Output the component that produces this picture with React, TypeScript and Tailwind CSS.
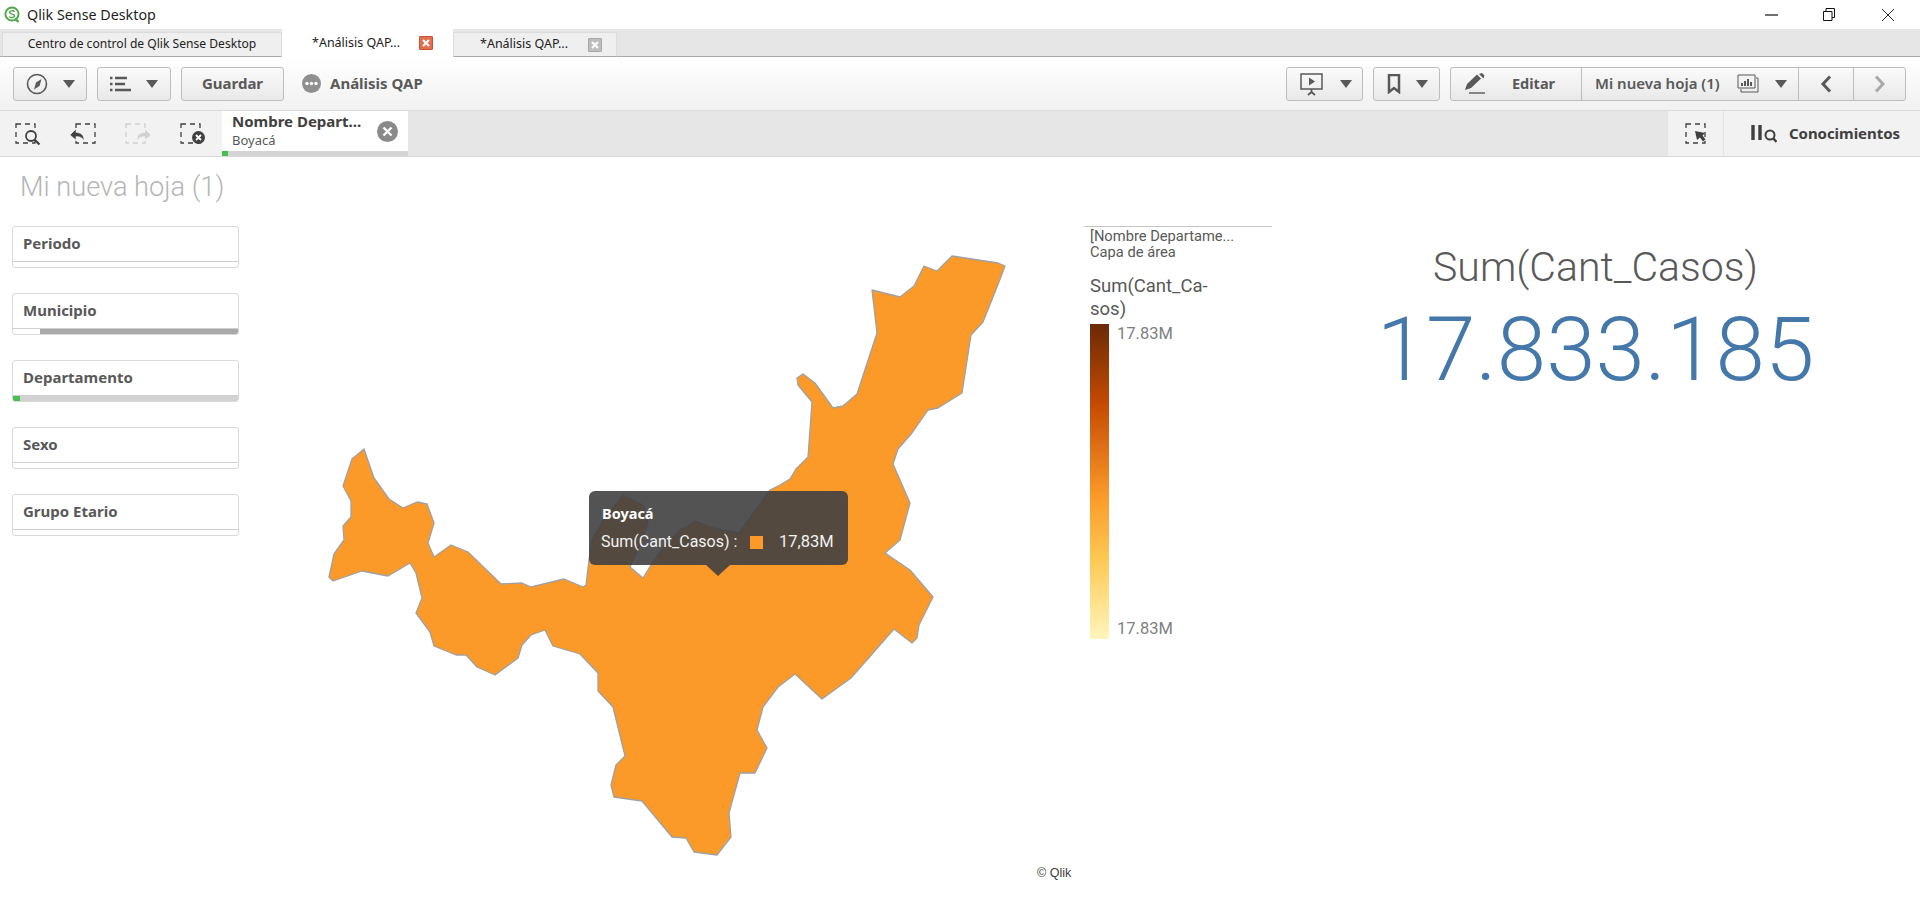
const UI = "font-['Noto_Sans',sans-serif]";

const BOYACA =
  "364,449 374,478 389,499 403,508 417,502 427,504 434,523 428,543 434,557 451,545 468,552 501,584 522,583 531,587 564,579 583,587 586,585 589,560 592,540 602,522 623,495 643,505 648,523 640,545 630,567 643,578 651,565 665,545 680,530 696,521 713,528 739,533 770,490 780,485 790,479 796,469 808,457 812,402 798,385 797,378 803,374 815,383 833,408 843,406 857,394 877,333 872,290 900,297 914,286 924,266 937,271 952,256 998,263 1005,266 997,287 983,322 971,335 962,393 938,408 928,410 912,433 898,449 893,464 910,503 900,540 885,553 910,570 933,597 919,625 917,638 912,643 894,629 851,678 822,699 795,674 778,687 763,707 757,730 767,748 755,773 740,773 729,813 731,837 717,855 694,852 686,838 672,837 642,801 614,797 611,785 616,765 625,756 613,707 598,691 598,673 580,654 553,646 545,630 531,635 522,645 518,658 495,675 477,667 466,655 456,655 434,646 430,632 416,613 422,598 416,573 410,563 388,576 362,571 333,581 329,577 334,554 344,540 343,526 351,517 351,501 343,486 352,459";

const Caret = () => (
  <svg width="12" height="8" viewBox="0 0 12 8"><path d="M0 0h12L6 8z" fill="#595959" /></svg>
);

// dashed selection frame used by the tools in the selection bar
const Frame = ({ x = 1, color = "#404040" }: { x?: number; color?: string }) => (
  <rect x={x} y="1" width="19" height="19" fill="none" stroke={color} strokeWidth="1.3" strokeDasharray="5 4" />
);

const ToolButton = ({ children, className = "" }: { children: React.ReactNode; className?: string }) => (
  <div className={`h-[34px] flex items-center border border-[#bdbdbd] rounded-[3px] bg-gradient-to-b from-[#fafafa] to-[#e9e9e9] ${className}`}>
    {children}
  </div>
);

const Filter = ({ name, strip }: { name: string; strip: React.ReactNode }) => (
  <div className="h-[42px] flex flex-col border border-[#d9d9d9] rounded-[3px] overflow-hidden bg-white">
    <div className="flex-1 pl-[10px] pt-[5px] text-[15px] leading-[22px] font-bold text-[#595959]">{name}</div>
    <div className="h-[6px] flex border-t border-[#cfcfcf]">{strip}</div>
  </div>
);

const App = () => {
  return (
    <div className={`${UI} w-[1920px] h-[905px] flex flex-col bg-white overflow-hidden`}>
      {/* Window title bar */}
      <div className="h-[29px] shrink-0 flex items-center bg-white">
        <svg className="ml-[4px]" width="16" height="17" viewBox="0 0 16 17">
          <circle cx="8" cy="8" r="6.6" fill="none" stroke="#52a94a" strokeWidth="2" />
          <path d="M11 12.5l3.5 3.5" stroke="#52a94a" strokeWidth="2.4" />
          <path d="M10.6 5.6C9.6 4.6 5.6 4.4 5.6 6.4c0 2 5 1.4 5 3.6 0 1.9-4 2-5.4.8" fill="none" stroke="#52a94a" strokeWidth="1.5" />
        </svg>
        <span className="ml-[7px] text-[14.3px] text-[#1f1f1f]">Qlik Sense Desktop</span>
        <div className="ml-auto flex items-center">
          <svg className="mr-[45px]" width="13" height="2" viewBox="0 0 13 2"><path d="M0 1h13" stroke="#111" strokeWidth="1.2" /></svg>
          <svg className="mr-[47px]" width="12" height="13" viewBox="0 0 12 13">
            <path d="M.5 3.5h8.5v9H.5zM3 3.5V.5h8.5v9H9" fill="none" stroke="#111" />
          </svg>
          <svg className="mr-[26px]" width="12" height="12" viewBox="0 0 12 12"><path d="M0 0l12 12M12 0L0 12" stroke="#111" strokeWidth="0.9" /></svg>
        </div>
      </div>

      {/* Browser tabs */}
      <div className="h-[28px] shrink-0 flex items-end bg-[#e6e6e6] border-b border-[#a9a9a9] pl-[2px] text-[12.5px] text-[#222]">
        <div className="w-[280px] h-[25px] -mb-px flex items-center justify-center bg-[#efefef] border border-[#dcdcdc] border-b-[#a9a9a9] text-[12.1px]">
          Centro de control de Qlik Sense Desktop
        </div>
        <div className="w-[171px] h-[28px] -mb-px flex items-center bg-white pl-[30px]">
          <span>*Análisis QAP...</span>
          <span className="ml-[19px] w-[14px] h-[14px] flex items-center justify-center bg-[#e2704f] border border-[#c9523a] rounded-[1px]">
            <svg width="8" height="8" viewBox="0 0 8 8"><path d="M1 1l6 6M7 1L1 7" stroke="#fff" strokeWidth="2" /></svg>
          </span>
        </div>
        <div className="w-[164px] h-[25px] -mb-px flex items-center bg-[#efefef] border border-[#dcdcdc] border-b-[#a9a9a9] pl-[26px]">
          <span>*Análisis QAP...</span>
          <span className="ml-[20px] w-[14px] h-[14px] flex items-center justify-center bg-[#bdbdbd] border border-[#a8a8a8] rounded-[1px]">
            <svg width="8" height="8" viewBox="0 0 8 8"><path d="M1 1l6 6M7 1L1 7" stroke="#fff" strokeWidth="2" /></svg>
          </span>
        </div>
      </div>

      {/* App toolbar */}
      <div className="h-[54px] shrink-0 flex items-center pl-[13px] pr-[14px] bg-gradient-to-b from-white to-[#f1f1f1] border-b border-[#dcdcdc] text-[#595959]">
        <ToolButton className="w-[74px] pl-[12px] gap-[15px]">
          <svg width="22" height="22" viewBox="0 0 22 22">
            <circle cx="11" cy="11" r="9.5" fill="none" stroke="#595959" strokeWidth="1.6" />
            <path d="M15.5 6l-2 7-5.5 3.5 2-7z" fill="#595959" />
          </svg>
          <Caret />
        </ToolButton>
        <ToolButton className="ml-[10px] w-[74px] pl-[12px] gap-[15px]">
          <svg width="21" height="16" viewBox="0 0 21 16">
            <path d="M0 2h2.5M5 2h12M0 8h2.5M5 8h10M0 14h2.5M5 14h16" stroke="#595959" strokeWidth="2.5" />
          </svg>
          <Caret />
        </ToolButton>
        <ToolButton className="ml-[10px] w-[103px] justify-center text-[15px] font-bold">Guardar</ToolButton>
        <svg className="ml-[18px]" width="19" height="19" viewBox="0 0 19 19">
          <circle cx="9.5" cy="9.5" r="9.5" fill="#8f8f8f" />
          <circle cx="5" cy="9.5" r="1.7" fill="#fff" />
          <circle cx="9.5" cy="9.5" r="1.7" fill="#fff" />
          <circle cx="14" cy="9.5" r="1.7" fill="#fff" />
        </svg>
        <span className="ml-[9px] text-[15px] font-bold">Análisis QAP</span>

        <ToolButton className="ml-auto w-[77px] pl-[13px] gap-[16px]">
          <svg width="24" height="24" viewBox="0 0 24 24">
            <path d="M1 2h21v15H1z" fill="none" stroke="#595959" strokeWidth="1.5" />
            <path d="M9 5.5l6 4-6 4z" fill="#595959" />
            <path d="M11.5 17v3M8 23l3.5-3 3.5 3" fill="none" stroke="#595959" strokeWidth="1.8" />
          </svg>
          <Caret />
        </ToolButton>
        <ToolButton className="ml-[10px] w-[67px] pl-[13px] gap-[15px]">
          <svg width="14" height="20" viewBox="0 0 14 20"><path d="M2 1h10v17l-5-4-5 4z" fill="none" stroke="#595959" strokeWidth="2.5" /></svg>
          <Caret />
        </ToolButton>
        <ToolButton className="ml-[10px] w-[456px]">
          <div className="w-[131px] h-full flex items-center pl-[13px] border-r border-[#bdbdbd]">
            <svg width="21" height="21" viewBox="0 0 21 21">
              <path d="M1 17l2-6L13 1.5l4 4L7 15z" fill="#595959" />
              <path d="M15 1l3-1 2.5 2.5-1 3z" fill="#595959" />
              <path d="M5 20h16" stroke="#595959" strokeWidth="1.4" />
            </svg>
            <span className="ml-[27px] text-[14.5px] font-bold">Editar</span>
          </div>
          <div className="w-[217px] h-full flex items-center pl-[13px] border-r border-[#bdbdbd]">
            <span className="text-[15px] font-semibold whitespace-nowrap">Mi nueva hoja (1)</span>
            <svg className="ml-[17px]" width="22" height="19" viewBox="0 0 22 19">
              <path d="M1 1h17v13H1z" fill="none" stroke="#595959" />
              <path d="M19 4h2v14H4v-3" fill="none" stroke="#595959" />
              <path d="M5 12V9M8 12V7M11 12V5M14 12V8" stroke="#595959" strokeWidth="2" />
            </svg>
            <span className="ml-[16px]"><Caret /></span>
          </div>
          <div className="w-[55px] h-full flex items-center justify-center border-r border-[#bdbdbd]">
            <svg width="12" height="18" viewBox="0 0 12 18"><path d="M10 1.5L3 9l7 7.5" fill="none" stroke="#595959" strokeWidth="3" /></svg>
          </div>
          <div className="flex-1 h-full flex items-center justify-center">
            <svg width="12" height="18" viewBox="0 0 12 18"><path d="M2 1.5L9 9l-7 7.5" fill="none" stroke="#a8a8a8" strokeWidth="3" /></svg>
          </div>
        </ToolButton>
      </div>

      {/* Selection bar */}
      <div className="h-[46px] shrink-0 flex bg-[#e6e6e6] border-b border-[#d9d9d9] text-[#404040]">
        <div className="w-[222px] h-full flex items-center bg-[#f2f2f2] pl-[15px]">
          <svg width="26" height="22" viewBox="0 0 26 22">
            <Frame />
            <circle cx="16" cy="13" r="5" fill="#f2f2f2" stroke="#404040" strokeWidth="1.8" />
            <path d="M19.5 16.5l5 5" stroke="#404040" strokeWidth="2.2" />
          </svg>
          <svg className="ml-[29px]" width="26" height="22" viewBox="0 0 26 22">
            <Frame x={6} />
            <path d="M0 12l6-6v3.5c5 0 8 2.5 8 8-2-3-4-4-8-4V17z" fill="#404040" stroke="#f2f2f2" strokeWidth="0.6" />
          </svg>
          <svg className="ml-[29px]" width="26" height="22" viewBox="0 0 26 22">
            <Frame color="#d0d0d0" />
            <path d="M26 12l-6-6v3.5c-5 0-8 2.5-8 8 2-3 4-4 8-4V17z" fill="#d0d0d0" stroke="#f2f2f2" strokeWidth="0.6" />
          </svg>
          <svg className="ml-[29px]" width="26" height="22" viewBox="0 0 26 22">
            <Frame />
            <circle cx="18.5" cy="14.5" r="6.5" fill="#404040" />
            <path d="M16 12l5 5M21 12l-5 5" stroke="#fff" strokeWidth="1.8" />
          </svg>
        </div>
        <div className="w-[186px] h-full flex flex-col bg-white">
          <div className="flex-1 flex items-center pl-[10px]">
            <div className="w-[144px]">
              <div className="text-[15px] leading-[19px] font-bold text-[#404040] whitespace-nowrap">Nombre Depart...</div>
              <div className="text-[13px] leading-[19px] text-[#595959]">Boyacá</div>
            </div>
            <svg className="ml-[1px]" width="21" height="21" viewBox="0 0 21 21">
              <circle cx="10.5" cy="10.5" r="10.5" fill="#8a8a8a" />
              <path d="M6.5 6.5l8 8M14.5 6.5l-8 8" stroke="#fff" strokeWidth="2.4" />
            </svg>
          </div>
          <div className="h-[5px] bg-[#d4d4d4]"><div className="w-[6px] h-full bg-[#46c04f]" /></div>
        </div>
        <div className="ml-auto w-[56px] h-full flex items-center justify-center bg-[#f2f2f2] border-l border-[#e3e3e3]">
          <svg width="22" height="21" viewBox="0 0 22 21">
            <Frame />
            <path d="M10 8l10 2-2.5 2.5 3 4-2.5 2-3-4L12 17z" fill="#404040" />
          </svg>
        </div>
        <div className="w-[197px] h-full flex items-center bg-[#f2f2f2] border-l border-[#e3e3e3] pl-[27px]">
          <svg width="26" height="19" viewBox="0 0 26 19">
            <path d="M2 1v15M9 1v15" stroke="#404040" strokeWidth="3.4" />
            <circle cx="19" cy="11" r="4.5" fill="none" stroke="#404040" strokeWidth="2" />
            <path d="M22 14l3.5 4" stroke="#404040" strokeWidth="2.4" />
          </svg>
          <span className="ml-[12px] text-[15px] font-bold tracking-[-0.05px] text-[#404040]">Conocimientos</span>
        </div>
      </div>

      {/* Sheet */}
      <div className="flex-1 flex flex-col">
        <div className="h-[69px] shrink-0 pl-[20px] pt-[11px] text-[27.2px] leading-[38px] text-[#b5b5b5] font-['Roboto',sans-serif] font-light whitespace-nowrap">
          Mi nueva hoja (1)
        </div>
        <div className="flex-1 flex">
          {/* Filter panes */}
          <div className="ml-[12px] w-[227px] flex flex-col gap-[25px]">
            <Filter name="Periodo" strip={null} />
            <Filter name="Municipio" strip={<div className="ml-[27px] flex-1 bg-[#a9a9a9]" />} />
            <Filter name="Departamento" strip={<div className="flex-1 bg-[#d2d2d2]"><div className="w-[7px] h-full bg-[#46c04f]" /></div>} />
            <Filter name="Sexo" strip={null} />
            <Filter name="Grupo Etario" strip={null} />
          </div>

          {/* Map */}
          <div className="relative w-[845px] h-[640px]">
            <svg width="845" height="640" viewBox="239 226 845 640">
              <polygon points={BOYACA} fill="#fb9a29" stroke="#a0a0a0" strokeWidth="1.3" strokeLinejoin="round" />
            </svg>
            <div className="absolute left-[350px] top-[265px] w-[259px] h-[74px] rounded-[6px] bg-[#404040]/90 text-white">
              <div className="pl-[13px] pt-[12px] text-[14.5px] leading-[20px] font-bold">Boyacá</div>
              <div className="flex items-center pl-[12px] pt-[9px] text-[16px] leading-[20px] font-['Roboto',sans-serif] text-[#f2f2f2]">
                <span className="w-[149px] whitespace-nowrap">Sum(Cant_Casos) :</span>
                <span className="w-[13px] h-[13px] bg-[#fb9a29]" />
                <span className="ml-[16px] text-[16.5px]">17,83M</span>
              </div>
              <div className="absolute left-[117px] top-full w-0 h-0 border-x-[12px] border-x-transparent border-t-[11px] border-t-[#404040]/90" />
            </div>
          </div>

          {/* Legend */}
          <div className="w-[188px] h-[414px] flex flex-col border-t border-[#c4c4c4] pl-[6px] font-['Roboto',sans-serif] text-[#595959]">
            <div className="pt-[1px] text-[14.7px] leading-[16px] whitespace-nowrap">[Nombre Departame...</div>
            <div className="text-[14.7px] leading-[16px]">Capa de área</div>
            <div className="mt-[15px] w-[125px] text-[18.5px] leading-[23px]">Sum(Cant_Ca-<br />sos)</div>
            <div className="mt-[3px] flex">
              <div className="w-[19px] h-[315px] bg-[linear-gradient(to_bottom,#6b2a06,#c44a03_25%,#fb9a2a_55%,#fdc954_75%,#fff6bd)]" />
              <div className="ml-[8px] h-[315px] flex flex-col justify-between py-[1px] text-[16.5px] leading-[18px] text-[#808080]">
                <span>17.83M</span>
                <span>17.83M</span>
              </div>
            </div>
          </div>

          {/* KPI */}
          <div className="flex-1 flex flex-col items-center pt-[17px] pl-[69px] pr-[70px] font-['Roboto',sans-serif]">
            <div className="text-[41px] leading-[48px] font-light text-[#595959] whitespace-nowrap">Sum(Cant_Casos)</div>
            <div className="mt-[9px] text-[89px] leading-[100px] font-light text-[#4477aa] whitespace-nowrap">17.833.185</div>
          </div>
        </div>
        <div className="h-[39px] shrink-0 pl-[1037px] text-[12.5px] leading-[14px] text-[#404040] font-['Liberation_Sans',sans-serif]">© Qlik</div>
      </div>
    </div>
  );
};

export default App;
